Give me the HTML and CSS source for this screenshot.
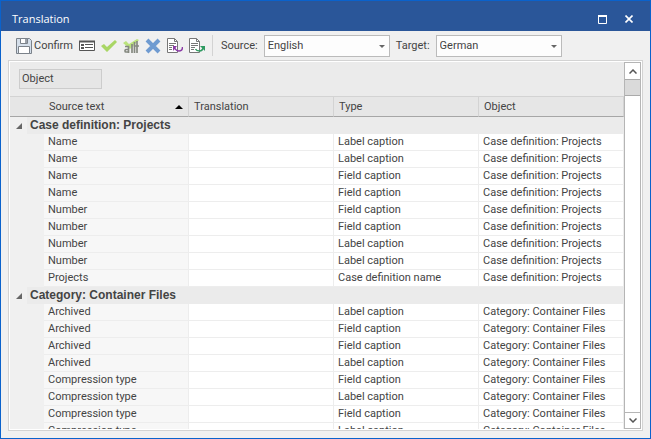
FILE: index.html
```
<!DOCTYPE html>
<html lang="en">
<head>
  <meta charset="UTF-8">
  <meta name="viewport" content="width=device-width, initial-scale=1.0">
  <title>Translation</title>
  <link rel="stylesheet" href="styles.css">
</head>
<body>
  <!-- Title bar -->
  <header class="titlebar">
    <h1>Translation</h1>
    <div class="window-buttons">
      <button type="button" aria-label="Maximize">
        <svg width="9" height="9" viewBox="0 0 9 9"><path d="M.5 1v7.500h8V1M0 1h9" fill="none" stroke="#fff"/><path d="M0 0h9v2H0z" fill="#fff"/></svg>
      </button>
      <button type="button" aria-label="Close">
        <svg width="8" height="8" viewBox="0 0 8 8"><path d="M.5.5l7 7M7.500.5l-7 7" fill="none" stroke="#fff" stroke-width="1.600"/></svg>
      </button>
    </div>
  </header>

  <!-- Toolbar -->
  <div class="toolbar">
    <button type="button" class="confirm">
      <svg width="16" height="16" viewBox="0 0 16 16">
        <path d="M.5.5h13l2 2v13H.5z" fill="#d5dfea" stroke="#7b828a"/>
        <path d="M4.500.5h7v5h-7z" fill="#fff" stroke="#7b828a"/>
        <path d="M9 1h2v4H9z" fill="#9aa1a9"/>
        <path d="M2.500 8.500h11v7h-11z" fill="#fff" stroke="#7b828a"/>
      </svg>
      Confirm
    </button>
    <button type="button" aria-label="Edit in form">
      <svg width="16" height="16" viewBox="0 0 16 16">
        <path d="M.5 3.500h15v9H.5z" fill="#fff" stroke="#555"/>
        <path d="M0 3.500h16" stroke="#555" stroke-width="2"/>
        <path d="M2 6h3v2H2zM2 9h3v2H2zM6 6h8v1H6zM6 9h8v1H6z" fill="#555"/>
      </svg>
    </button>
    <button type="button" aria-label="Accept">
      <svg width="16" height="16" viewBox="0 0 16 16"><path d="M0 8l3-2 3 3 8-7 2 2L6 14z" fill="#a9d665"/></svg>
    </button>
    <button type="button" aria-label="Accept all">
      <svg width="16" height="16" viewBox="0 0 16 16">
        <path d="M0 5l3-2 3 3 8-5 2 1-9 9z" fill="#bbe37d"/>
        <path d="M2 8.500h3.500V15M5.500 11.500H3q-1 0-1 1.500 0 1 1 1h2.500M9 6v9M11.500 4v11M14 3v12M10.500 8h5.500" fill="none" stroke="#858980" stroke-width="1.700"/>
      </svg>
    </button>
    <button type="button" aria-label="Reject">
      <svg width="16" height="16" viewBox="0 0 16 16"><path d="M2 2l12 12M14 2L2 14" stroke="#6f9bd1" stroke-width="4"/></svg>
    </button>
    <button type="button" aria-label="Import">
      <svg width="16" height="16" viewBox="0 0 16 16">
        <path d="M.5.5h7l3 3v11H.5z" fill="#fff" stroke="#777"/>
        <path d="M7.500.5v3h3M2 5.500h7M2 7.500h5M2 9.500h3M2 11.500h3" fill="none" stroke="#777"/>
        <path d="M15.500 9q0 4-3.500 4-3 0-5-4" fill="none" stroke="#8a3aa5" stroke-width="1.500"/>
        <path d="M6 8h4l-4 5z" fill="#8a3aa5"/>
      </svg>
    </button>
    <button type="button" aria-label="Export">
      <svg width="16" height="16" viewBox="0 0 16 16">
        <path d="M.5.5h7l3 3v11H.5z" fill="#fff" stroke="#777"/>
        <path d="M7.500.5v3h3M2 5.500h7M2 7.500h7M2 9.500h4M2 11.500h3" fill="none" stroke="#777"/>
        <path d="M6.500 11q1 2 4 2t4-4" fill="none" stroke="#2f9a61" stroke-width="1.500"/>
        <path d="M11 8h5v5z" fill="#2f9a61"/>
      </svg>
    </button>
    <span class="separator"></span>
    <label for="source">Source:</label>
    <span class="combo">
      <select id="source">
        <option>English</option>
        <option>German</option>
      </select>
    </span>
    <label for="target">Target:</label>
    <span class="combo">
      <select id="target">
        <option>German</option>
        <option>English</option>
      </select>
    </span>
  </div>

  <!-- Grid -->
  <main class="grid">
    <div class="grid-body">
      <div class="group-panel"><button type="button">Object</button></div>
      <table>
        <colgroup><col class="indent"><col><col><col><col></colgroup>
        <thead>
          <tr>
            <th colspan="2" class="sorted">
              <div>Source text <svg width="8" height="4" viewBox="0 0 8 4"><path d="M4 0l4 4H0z"/></svg></div>
            </th>
            <th>Translation</th>
            <th>Type</th>
            <th>Object</th>
          </tr>
        </thead>
        <tbody>
          <tr class="group">
            <th colspan="5">
              <div>
                <button type="button" aria-label="Collapse"><svg width="6" height="6" viewBox="0 0 6 6"><path d="M6 0v6H0z" fill="#666"/></svg></button>
                <span>Case definition: Projects</span>
              </div>
            </th>
          </tr>
          <tr><td></td><td>Name</td><td></td><td>Label caption</td><td>Case definition: Projects</td></tr>
          <tr><td></td><td>Name</td><td></td><td>Label caption</td><td>Case definition: Projects</td></tr>
          <tr><td></td><td>Name</td><td></td><td>Field caption</td><td>Case definition: Projects</td></tr>
          <tr><td></td><td>Name</td><td></td><td>Field caption</td><td>Case definition: Projects</td></tr>
          <tr><td></td><td>Number</td><td></td><td>Field caption</td><td>Case definition: Projects</td></tr>
          <tr><td></td><td>Number</td><td></td><td>Field caption</td><td>Case definition: Projects</td></tr>
          <tr><td></td><td>Number</td><td></td><td>Label caption</td><td>Case definition: Projects</td></tr>
          <tr><td></td><td>Number</td><td></td><td>Label caption</td><td>Case definition: Projects</td></tr>
          <tr><td></td><td>Projects</td><td></td><td>Case definition name</td><td>Case definition: Projects</td></tr>
        </tbody>
        <tbody>
          <tr class="group">
            <th colspan="5">
              <div>
                <button type="button" aria-label="Collapse"><svg width="6" height="6" viewBox="0 0 6 6"><path d="M6 0v6H0z" fill="#666"/></svg></button>
                <span>Category: Container Files</span>
              </div>
            </th>
          </tr>
          <tr><td></td><td>Archived</td><td></td><td>Label caption</td><td>Category: Container Files</td></tr>
          <tr><td></td><td>Archived</td><td></td><td>Field caption</td><td>Category: Container Files</td></tr>
          <tr><td></td><td>Archived</td><td></td><td>Field caption</td><td>Category: Container Files</td></tr>
          <tr><td></td><td>Archived</td><td></td><td>Label caption</td><td>Category: Container Files</td></tr>
          <tr><td></td><td>Compression type</td><td></td><td>Field caption</td><td>Category: Container Files</td></tr>
          <tr><td></td><td>Compression type</td><td></td><td>Label caption</td><td>Category: Container Files</td></tr>
          <tr><td></td><td>Compression type</td><td></td><td>Field caption</td><td>Category: Container Files</td></tr>
          <tr><td></td><td>Compression type</td><td></td><td>Label caption</td><td>Category: Container Files</td></tr>
        </tbody>
      </table>
    </div>
    <div class="scrollbar">
      <button type="button" aria-label="Scroll up">
        <svg width="8" height="5" viewBox="0 0 8 5"><path d="M.5 4.500L4 1l3.500 3.500" fill="none" stroke="#555" stroke-width="1.500"/></svg>
      </button>
      <div class="thumb"></div>
      <button type="button" class="down" aria-label="Scroll down">
        <svg width="8" height="5" viewBox="0 0 8 5"><path d="M.5.5L4 4 7.500.5" fill="none" stroke="#555" stroke-width="1.500"/></svg>
      </button>
    </div>
  </main>
</body>
</html>
```
FILE: styles.css
```
:root {
  --frame: #0a62cc;
  --title: #2a5699;
  --face: #f0f0f0;
  --head: #e6e6e6;
  --group: #ebebeb;
  --border: #d3d3d3;
  --line: #ededed;
  --text: #444;
}
* {
  box-sizing: border-box;
}
body {
  margin: 0;
  height: 100vh;
  display: flex;
  flex-direction: column;
  border: 1px solid var(--frame);
  background: var(--face);
  color: var(--text);
  font: 11px/16px Roboto, Arial, sans-serif;
  overflow: hidden;
}
button {
  font: inherit;
  color: inherit;
  background: none;
  border: none;
  padding: 0;
}
svg {
  display: block;
  flex: none;
}
/* Title bar */
.titlebar {
  flex: none;
  display: flex;
  align-items: center;
  justify-content: space-between;
  height: 30px;
  padding: 6px 17px 0 11px;
  background: var(--title);
  color: #fff;
}
.titlebar h1 {
  margin: 0;
  font: 11px/16px "Open Sans", sans-serif;
}
.window-buttons {
  display: flex;
  align-items: center;
  gap: 18px;
}
/* Toolbar */
.toolbar {
  flex: none;
  display: flex;
  align-items: center;
  height: 29px;
  padding-left: 15px;
  gap: 6px;
}
.toolbar button {
  flex: none;
}
.confirm {
  display: flex;
  align-items: center;
  gap: 2px;
  width: 57px;
}
.separator {
  width: 1px;
  height: 21px;
  margin: 0 2px 0 1px;
  background: var(--border);
}
.combo {
  position: relative;
}
.combo::after {
  content: "";
  position: absolute;
  top: 10px;
  right: 5px;
  border: 3px solid transparent;
  border-top-color: #666;
  border-bottom: none;
  pointer-events: none;
}
.combo select {
  display: block;
  appearance: none;
  width: 126px;
  height: 22px;
  padding: 0 3px;
  border: 1px solid #bbb;
  border-radius: 0;
  background: #fdfdfd;
  color: inherit;
  font: inherit;
}
/* Grid */
.grid {
  flex: 1;
  min-height: 0;
  display: flex;
  margin: 0 7px 7px;
  padding: 1px;
  border: 1px solid var(--border);
  background: #fff;
}
.grid-body {
  flex: 1;
  min-width: 0;
  overflow: hidden;
}
.group-panel {
  height: 34px;
  padding: 7px 9px;
  background: var(--group);
}
.group-panel button {
  width: 83px;
  height: 20px;
  padding: 0 2px;
  border: 1px solid #ccc;
  background: var(--head);
  text-align: left;
}
table {
  width: 100%;
  table-layout: fixed;
  border-collapse: separate;
  border-spacing: 0;
}
.indent {
  width: 34px;
}
th, td {
  padding: 0 4px;
  white-space: nowrap;
  text-align: left;
}
thead th {
  height: 21px;
  padding: 0 5px;
  background: var(--head);
  border-top: 1px solid var(--border);
  border-right: 1px solid var(--border);
  border-bottom: 1px solid #a6a6a6;
  font-weight: normal;
}
thead .sorted {
  padding-left: 39px;
}
.sorted div {
  display: flex;
  align-items: center;
  justify-content: space-between;
}
td {
  height: 17px;
  border-right: 1px solid var(--line);
  border-bottom: 1px solid var(--line);
}
td:nth-child(1) {
  background: var(--face);
  border-color: var(--face);
}
td:nth-child(2) {
  background: #f7f7f7;
}
.group th {
  height: 17px;
  padding: 0;
  background: var(--face);
  font: bold 12px/17px "Liberation Sans", Arial, sans-serif;
}
.group div {
  display: flex;
}
.group button {
  flex: none;
  display: flex;
  align-items: center;
  justify-content: center;
  width: 17px;
}
.group span {
  flex: 1;
  padding-left: 3px;
  background: var(--group);
}
/* Scrollbar */
.scrollbar {
  flex: none;
  width: 17px;
  display: flex;
  flex-direction: column;
  border: 1px solid #b5b5b5;
}
.scrollbar button {
  display: flex;
  align-items: center;
  justify-content: center;
  height: 16px;
}
.scrollbar .thumb {
  height: 17px;
  background: #dadada;
  border: solid #aaa;
  border-width: 1px 0;
}
.scrollbar .down {
  margin-top: auto;
  border-top: 1px solid #b5b5b5;
}
```
